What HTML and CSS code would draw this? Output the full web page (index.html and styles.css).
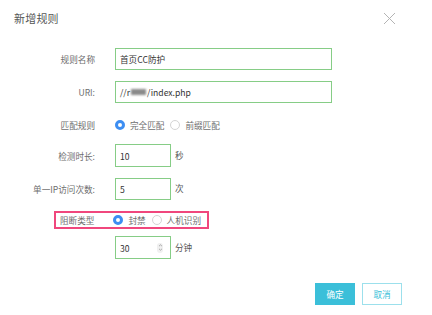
FILE: index.html
```html
<!DOCTYPE html>
<html lang="zh">
<head>
    <meta charset="UTF-8">
    <title>新增规则</title>
    <link rel="stylesheet" href="styles.css">
</head>
<body>
    <div class="dialog">
        <div class="dialog-header">
            <h1>新增规则</h1>
            <svg class="close" width="13" height="13" viewBox="0 0 13 13">
                <path d="M1 1L12 12M12 1L1 12" stroke="#b4b4b4" stroke-width="1" fill="none"/>
            </svg>
        </div>

        <div class="form">
            <div class="row">
                <span class="label">规则名称</span>
                <div class="field wide">首页CC防护</div>
            </div>
            <div class="row">
                <span class="label">URI:</span>
                <div class="field wide">//r<span class="blur"></span>/index.php</div>
            </div>
            <div class="row radios">
                <span class="label">匹配规则</span>
                <span class="radio on"></span><span class="opt">完全匹配</span>
                <span class="radio"></span><span class="opt">前缀匹配</span>
            </div>
            <div class="row">
                <span class="label">检测时长:</span>
                <div class="field short tall">10</div>
                <span class="unit">秒</span>
            </div>
            <div class="row">
                <span class="label">单一IP访问次数:</span>
                <div class="field short">5</div>
                <span class="unit">次</span>
            </div>
            <div class="row radios mark">
                <span class="label">阻断类型</span>
                <span class="radio on"></span><span class="opt">封禁</span>
                <span class="radio"></span><span class="opt last">人机识别</span>
            </div>
            <div class="row">
                <span class="label"></span>
                <div class="field short tall">
                    <span>30</span>
                    <span class="spin">
                        <svg width="5" height="9" viewBox="0 0 5 9">
                            <path d="M1 3.2L2.5 1.8L4 3.2M1 5.8L2.5 7.2L4 5.8" stroke="#999" stroke-width="0.8" fill="none"/>
                        </svg>
                    </span>
                </div>
                <span class="unit">分钟</span>
            </div>
        </div>

        <div class="footer">
            <button class="btn primary">确定</button>
            <button class="btn">取消</button>
        </div>
    </div>
</body>
</html>
```

FILE: styles.css
```css
/* General */
body {
    margin: 0;
    background: #fff;
    font-family: "Noto Sans CJK SC", "Liberation Sans", sans-serif;
    color: #666;
}

.dialog {
    width: 432px;
    height: 315px;
    box-sizing: border-box;
}

/* Header */
.dialog-header {
    display: flex;
    justify-content: space-between;
    align-items: center;
    padding: 10px 36px 0 14px;
    height: 16px;
}

.dialog-header h1 {
    margin: 0;
    font-size: 11px;
    font-weight: normal;
    color: #555;
    letter-spacing: 0.2px;
}

.close {
    margin-top: 1px;
}

/* Form */
.form {
    padding-top: 22px;
}

.row {
    display: flex;
    align-items: center;
    margin-bottom: 11px;
    font-size: 8.6px;
    white-space: nowrap;
}

.label {
    width: 95px;
    text-align: right;
    margin-right: 20px;
    color: #6e6e6e;
    flex-shrink: 0;
}

.field {
    box-sizing: border-box;
    height: 22px;
    border: 1px solid #86cd86;
    display: flex;
    align-items: center;
    padding: 0 4px;
    color: #333;
    font-size: 8.6px;
}

.field.wide {
    width: 217px;
}

.field.short {
    width: 56px;
    justify-content: space-between;
}

.field.tall {
    height: 23px;
}

.blur {
    display: inline-block;
    width: 15px;
    height: 6px;
    background: #8a8a8a;
    filter: blur(1.2px);
    margin: 0 1px;
}

.spin {
    width: 6px;
    height: 10px;
    border-radius: 3px;
    background: #f0f0f0;
    display: flex;
    align-items: center;
    justify-content: center;
    margin-right: 3px;
}

.unit {
    margin-left: 4px;
    color: #555;
    margin-top: -2px;
}

/* Radios */
.row.radios {
    height: 16px;
    margin-top: 14px;
}

.radio {
    box-sizing: border-box;
    width: 10px;
    height: 10px;
    border-radius: 50%;
    border: 1px solid #d4d4d4;
    background: #fff;
    margin-right: 5px;
    flex-shrink: 0;
}

.radio.on {
    border: 3.3px solid #3d8ef2;
}

.opt {
    margin-right: 6px;
    color: #6e6e6e;
}

.row.mark {
    box-sizing: border-box;
    width: fit-content;
    height: 18px;
    margin: 0 0 7px 54px;
    border: 2px solid #f0477d;
    padding: 0 6px 0 4px;
}

.row.mark .label {
    width: auto;
    text-align: left;
    margin-right: 19px;
}

.row.mark .opt.last {
    margin-right: 0;
}

/* Footer */
.footer {
    display: flex;
    justify-content: flex-end;
    gap: 7px;
    padding: 13px 30px 0 0;
}

.btn {
    box-sizing: border-box;
    width: 40px;
    height: 22px;
    border: 1.5px solid #9ce0ec;
    background: #fff;
    color: #3bbfd9;
    font-family: inherit;
    font-size: 8.6px;
    padding: 0;
    cursor: pointer;
}

.btn.primary {
    background: #3bbfd9;
    border-color: #3bbfd9;
    color: #fff;
}
```
